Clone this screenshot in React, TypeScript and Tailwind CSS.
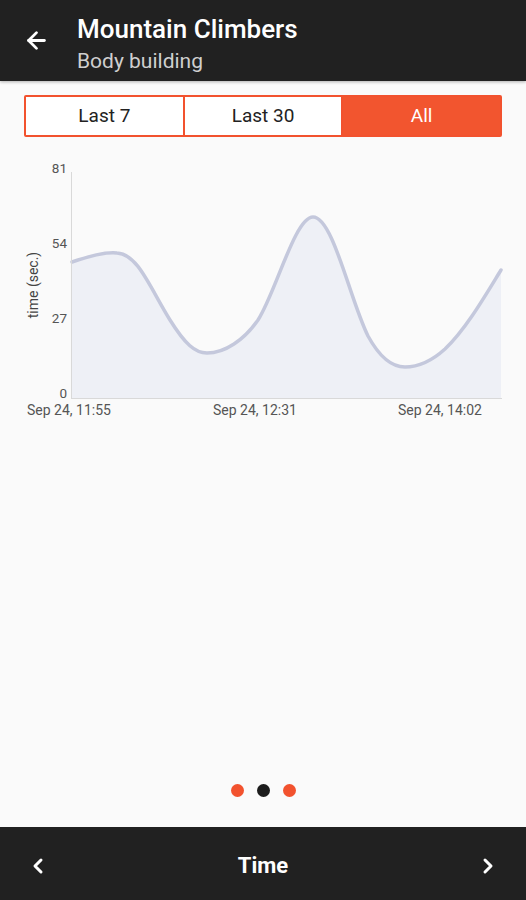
import { ArrowLeft, ChevronLeft, ChevronRight } from 'lucide-react';

const ranges = ['Last 7', 'Last 30', 'All'];

const yTicks = [
    { label: '81', y: 173 },
    { label: '54', y: 248 },
    { label: '27', y: 323 },
    { label: '0', y: 398 },
];

const xTicks = [
    { label: 'Sep 24, 11:55', x: 27 },
    { label: 'Sep 24, 12:31', x: 213 },
    { label: 'Sep 24, 14:02', x: 398 },
];

// curve drawn in page coordinates, svg starts at y=150
const curve =
    'M72,262 C90,256 104,252 117,253 C138,254 150,288 170,320 C185,344 195,353 207,353 C225,353 244,340 258,320 C276,292 295,217 313,217 C333,217 350,300 368,336 C380,358 392,367 405,367 C420,367 434,359 445,349 C466,329 485,296 501,270';

function Chart() {
    return (
        <svg width="526" height="275" viewBox="0 150 526 275" className="block">
            <path d={`${curve} L501,398 L72,398 Z`} fill="#eef0f6" />
            <path d={curve} fill="none" stroke="#c4c8dc" strokeWidth="3.5" strokeLinecap="round" />
            <line x1="71.5" y1="172" x2="71.5" y2="398" stroke="#d9d9d9" strokeWidth="1" />
            <line x1="71" y1="398.5" x2="502" y2="398.5" stroke="#d9d9d9" strokeWidth="1" />
            {yTicks.map((t) => (
                <text key={t.label} x="67" y={t.y} textAnchor="end" fontSize="13.5" fill="#555" fontFamily="Roboto, sans-serif">
                    {t.label}
                </text>
            ))}
            {xTicks.map((t) => (
                <text key={t.label} x={t.x} y="415" fontSize="14" fill="#555" fontFamily="Roboto, sans-serif">
                    {t.label}
                </text>
            ))}
            <text
                x="0"
                y="0"
                transform="translate(38 285) rotate(-90)"
                textAnchor="middle"
                fontSize="14"
                fill="#444"
                fontFamily="Roboto, sans-serif"
            >
                time (sec.)
            </text>
        </svg>
    );
}

export default function App() {
    return (
        <div className="flex flex-col h-[900px] w-[526px] bg-[#fafafa] font-['Roboto',sans-serif] overflow-hidden">
            <header className="flex items-center h-[81px] bg-[#212121] text-white shrink-0 shadow-[0_1px_3px_rgba(0,0,0,0.3)]">
                <div className="w-[77px] flex justify-center pl-[1px] pr-[5px]">
                    <ArrowLeft size={27} strokeWidth={2.5} />
                </div>
                <div className="flex flex-col pt-[6px]">
                    <h1 className="text-[26px] font-medium leading-[34px]">Mountain Climbers</h1>
                    <p className="text-[21px] leading-[30px] text-[#cfcfcf]">Body building</p>
                </div>
            </header>

            <div className="flex mx-[24px] mt-[14px] h-[42px] border-2 border-[#f2522e] rounded-[2px] overflow-hidden">
                {ranges.map((r, i) => (
                    <div
                        key={r}
                        className={
                            i === 2
                                ? 'flex-1 flex items-center justify-center bg-[#f2552f] text-white text-[19px]'
                                : 'flex-1 flex items-center justify-center bg-white text-[#222] text-[19px] border-r-2 border-[#f2522e]'
                        }
                    >
                        {r}
                    </div>
                ))}
            </div>

            <div className="mt-[13px]">
                <Chart />
            </div>

            <div className="flex-1 flex items-end justify-center pb-[30px]">
                <div className="flex gap-[13px]">
                    <span className="w-[13px] h-[13px] rounded-full bg-[#f2522e]" />
                    <span className="w-[13px] h-[13px] rounded-full bg-[#1c1c1c]" />
                    <span className="w-[13px] h-[13px] rounded-full bg-[#f2522e]" />
                </div>
            </div>

            <footer className="flex items-center justify-between h-[73px] bg-[#212121] text-white shrink-0 px-[26px] pt-[4px]">
                <ChevronLeft size={24} strokeWidth={3} />
                <span className="text-[22px] font-bold">Time</span>
                <ChevronRight size={24} strokeWidth={3} />
            </footer>
        </div>
    );
}
